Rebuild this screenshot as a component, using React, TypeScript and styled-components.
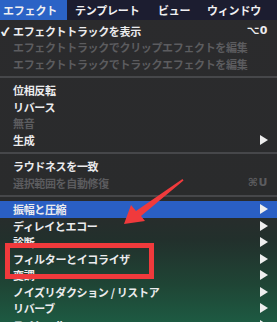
import React from "react";
import styled, { createGlobalStyle } from "styled-components";

const Global = createGlobalStyle`
  html, body { margin: 0; padding: 0; background: #2a2a2c; }
  body { width: 277px; height: 322px; overflow: hidden; font-family: "Noto Sans CJK JP", "Noto Sans", sans-serif; }
`;

const Screen = styled.div`
  position: relative;
  width: 277px;
  height: 322px;
  overflow: hidden;
  display: flex;
  flex-direction: column;
  background: linear-gradient(180deg, #2b2b2d 0px, #2a2b2c 205px, #22302c 240px, #1f4535 285px, #1d5a42 322px);
`;

const MenuBar = styled.div`
  height: 20px;
  flex: none;
  display: flex;
  align-items: center;
  background: #1c1d30;
`;

const BarItem = styled.div<{ $active?: boolean; $w: number }>`
  width: ${(p) => p.$w}px;
  height: 20px;
  display: flex;
  align-items: center;
  padding-left: ${(p) => (p.$active ? 3 : 0)}px;
  box-sizing: border-box;
  background: ${(p) => (p.$active ? "#2b63c6" : "transparent")};
  color: #f0f0f2;
  font-size: 11px;
  font-weight: 700;
  letter-spacing: -0.2px;
  white-space: nowrap;
`;

const Menu = styled.div`
  display: flex;
  flex-direction: column;
  padding-top: 2.5px;
`;

const Row = styled.div<{ $disabled?: boolean; $hi?: boolean }>`
  height: 16.5px;
  flex: none;
  display: flex;
  align-items: center;
  padding: 0 9px 0 13px;
  position: relative;
  background: ${(p) => (p.$hi ? "#2a5fc4" : "transparent")};
  color: ${(p) => (p.$disabled ? "#5c5c5f" : "#ececee")};
  font-size: 11px;
  font-weight: 700;
  letter-spacing: -0.35px;
  white-space: nowrap;
`;

const Label = styled.span`
  flex: 1;
`;

const Check = styled.span`
  position: absolute;
  left: 1px;
  font-size: 11px;
  font-weight: 700;
  color: #f0f0f0;
  text-shadow: 0.4px 0 0 #f0f0f0;
`;

const Shortcut = styled.span<{ $disabled?: boolean }>`
  color: ${(p) => (p.$disabled ? "#5c5c5f" : "#ececee")};
  font-family: "DejaVu Sans", sans-serif;
  font-weight: 700;
  font-size: 11px;
  letter-spacing: 0.5px;
`;

const Sub = styled.span`
  width: 0;
  height: 0;
  border-top: 5px solid transparent;
  border-bottom: 5px solid transparent;
  border-left: 8px solid #eeeeee;
`;

const Sep = styled.div`
  height: 10px;
  flex: none;
  display: flex;
  align-items: center;
  &::after {
    content: "";
    flex: 1;
    height: 2px;
    background: #46474a;
  }
`;

const Box = styled.div`
  position: absolute;
  left: 5px;
  top: 243px;
  width: 149px;
  height: 36px;
  border: 5px solid #f03a3c;
  box-sizing: border-box;
`;

const Arrow = styled.svg`
  position: absolute;
  left: 0;
  top: 0;
  pointer-events: none;
`;

type Item = { t: string; d?: boolean; sub?: boolean; sc?: string; hi?: boolean; check?: boolean } | "sep";

const items: Item[] = [
  { t: "エフェクトトラックを表示", check: true, sc: "⌥0" },
  { t: "エフェクトトラックでクリップエフェクトを編集", d: true },
  { t: "エフェクトトラックでトラックエフェクトを編集", d: true },
  "sep",
  { t: "位相反転" },
  { t: "リバース" },
  { t: "無音", d: true },
  { t: "生成", sub: true },
  "sep",
  { t: "ラウドネスを一致" },
  { t: "選択範囲を自動修復", d: true, sc: "⌘U" },
  "sep",
  { t: "振幅と圧縮", sub: true, hi: true },
  { t: "ディレイとエコー", sub: true },
  { t: "診断", sub: true },
  { t: "フィルターとイコライザ", sub: true },
  { t: "変調", sub: true },
  { t: "ノイズリダクション / リストア", sub: true },
  { t: "リバーブ", sub: true },
  { t: "スペシャル", sub: true },
];

export default function App() {
  return (
    <Screen>
      <Global />
      <MenuBar>
        <BarItem $active $w={67}>エフェクト</BarItem>
        <BarItem $w={8} />
        <BarItem $w={83}>テンプレート</BarItem>
        <BarItem $w={49}>ビュー</BarItem>
        <BarItem $w={70}>ウィンドウ</BarItem>
      </MenuBar>
      <Menu>
        {items.map((it, i) =>
          it === "sep" ? (
            <Sep key={i} />
          ) : (
            <Row key={i} $disabled={it.d} $hi={it.hi}>
              {it.check && <Check>✓</Check>}
              <Label>{it.t}</Label>
              {it.sc && <Shortcut $disabled={it.d}>{it.sc}</Shortcut>}
              {it.sub && <Sub />}
            </Row>
          )
        )}
      </Menu>
      <Box />
      <Arrow width="277" height="322" viewBox="0 0 277 322">
        <path d="M182.5 179 L183.5 180.5 L141 216 L145 221 L124 224 L131 205 L136 211 Z" fill="#f03a3c" />
      </Arrow>
    </Screen>
  );
}
